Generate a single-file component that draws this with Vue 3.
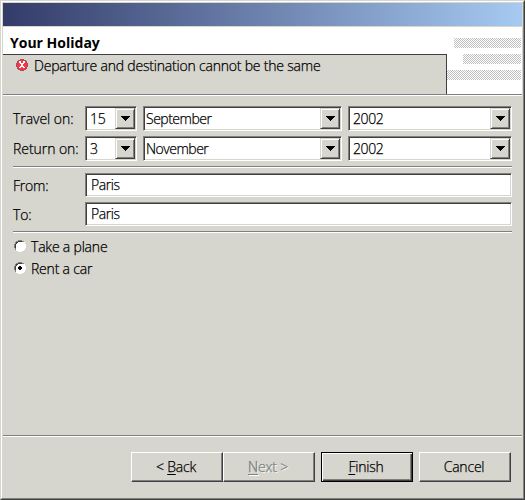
<script setup>
const dates = [
  { label: 'Travel on:', values: ['15', 'September', '2002'] },
  { label: 'Return on:', values: ['3', 'November', '2002'] }
]
const places = [
  { label: 'From:', value: 'Paris' },
  { label: 'To:', value: 'Paris' }
]
const transport = [
  { label: 'Take a plane', on: false },
  { label: 'Rent a car', on: true }
]
</script>

<template>
  <div class="window">
    <div class="frame">
      <div class="titlebar"></div>
      <header class="banner">
        <div class="left">
          <h1>Your Holiday</h1>
          <div class="message">
            <svg width="12" height="12" viewBox="0 0 12 12" shape-rendering="crispEdges">
              <path d="M4 0h4v1h2v1h1v2h1v4h-1v2h-1v1H8v1H4v-1H2v-1H1V8H0V4h1V2h1V1h2z" fill="#98505a" />
              <path d="M4 1h4v1h2v2h1v4h-1v2H8v1H4v-1H2V8H1V4h1V2h2z" fill="#fc3544" />
              <path d="M3 2h2v2h2V2h2v2H8v1H7v2h1v1h1v1H7V8H5v1H3V8h1V7h1V5H4V4H3z" fill="#fff" />
            </svg>
            <span>Departure and destination cannot be the same</span>
          </div>
        </div>
        <svg class="stripes" width="75" height="67" viewBox="0 0 75 67" shape-rendering="crispEdges">
          <defs>
            <pattern id="dither" width="2" height="2" patternUnits="userSpaceOnUse">
              <path d="M0 0h1v1H0zM1 1h1v1H1z" fill="#c0c0c0" />
            </pattern>
          </defs>
          <path d="M7 11h67v10H7zM16 27h58v10H16zM0 43h74v10H0z" fill="url(#dither)" />
        </svg>
      </header>
      <main>
        <div v-for="d in dates" :key="d.label" class="row date">
          <span class="label">{{ d.label }}</span>
          <div class="combos">
            <div v-for="(v, i) in d.values" :key="i" class="field combo">
              <span>{{ v }}</span>
              <i class="drop"><svg width="9" height="5" viewBox="0 0 9 5" shape-rendering="crispEdges"><path d="M0 0h9v1H8v1H7v1H6v1H5v1H4V4H3V3H2V2H1V1H0z" /></svg></i>
            </div>
          </div>
        </div>
        <div class="rule first"></div>
        <div v-for="p in places" :key="p.label" class="row place">
          <span class="label">{{ p.label }}</span>
          <div class="field">{{ p.value }}</div>
        </div>
        <div class="rule second"></div>
        <div v-for="t in transport" :key="t.label" class="option">
          <svg width="12" height="12" viewBox="0 0 12 12" shape-rendering="crispEdges">
            <path d="M4 1h4v1h2v2h1v4h-1v2H8v1H4v-1H2V8H1V4h1V2h2z" fill="#fff" />
            <path d="M4 0h4v1h2v1H8V1H4v1H2v2H1v4h1v2H1V8H0V4h1V2h1V1h2z" fill="#808080" />
            <path d="M4 1h4v1H4v1H3v1H2v4H1V4h1V2h2z" fill="#404040" />
            <path d="M10 2h1v2h1v4h-1v2h-1v1H8v1H4v-1H2v-1h2v1h4v-1h2V8h1V4h-1z" fill="#fff" />
            <path v-if="t.on" d="M5 4h2v1h1v2H7v1H5V7H4V5h1z" fill="#000" />
          </svg>
          <span>{{ t.label }}</span>
        </div>
      </main>
      <footer>
        <div class="button"><span>&lt; <u>B</u>ack</span></div>
        <div class="button disabled"><span><u>N</u>ext &gt;</span></div>
        <div class="button default"><span><u>F</u>inish</span></div>
        <div class="button cancel"><span>Cancel</span></div>
      </footer>
    </div>
  </div>
</template>

<style>
body { margin: 0; }
</style>

<style scoped>
* { box-sizing: border-box; }
.window {
  width: 525px; height: 500px; background: #d6d5ce; color: #000;
  font: 300 14px/17px "Open Sans", "Noto Sans", sans-serif; letter-spacing: -0.2px;
  -webkit-text-stroke: 0.25px currentColor;
  border: 1px solid; border-color: #d6d5ce #404040 #404040 #d6d5ce;
}
.frame {
  height: 498px; border: 1px solid; border-color: #fff #808080 #808080 #fff;
  padding: 1px 1px 0; display: flex; flex-direction: column; white-space: nowrap;
}
.titlebar { height: 23px; background: linear-gradient(90deg, #333b69, #a6caf0); margin-bottom: 1px; flex: none; }
.banner { height: 67px; flex: none; display: flex; background: #fff; }
.left { width: 444px; flex: none; display: flex; flex-direction: column; }
h1 {
  margin: 0; height: 27px; padding: 7px 0 0 7px; font-size: 14px; line-height: 17px;
  font-weight: 700; letter-spacing: 0; -webkit-text-stroke: 0;
}
.message {
  flex: 1; background: #d6d5ce; border: solid #404040; border-width: 1px 1px 0 0;
  display: flex; align-items: flex-start; padding: 2px 0 0 13px; gap: 6px;
}
.message svg { margin-top: 2px; }
.stripes { flex: none; }
main { flex: 1; border-top: 1px solid #808080; box-shadow: inset 0 1px #fff; padding: 11px 10px 0 10px; }
.row { display: grid; }
.date { grid-template-columns: 72px 427px; height: 25px; margin-bottom: 5px; }
.date .label { letter-spacing: -0.05px; }
.combos { display: grid; grid-template-columns: 52px 199px 164px; column-gap: 6px; }
.label { padding-top: 4px; }
.field {
  background: #fff; border: 1px solid; border-color: #808080 #fff #fff #808080;
  box-shadow: inset 1px 1px #404040, inset -1px -1px #d6d5ce;
}
.combo { display: flex; justify-content: space-between; padding: 1px; }
.combo span { padding: 2px 0 0 3px; }
.combo:nth-child(2) span { padding-left: 1px; letter-spacing: -0.5px; }
.combo:nth-child(3) span { letter-spacing: -0.4px; }
.drop {
  width: 20px; height: 21px; background: #d6d5ce; border: 1px solid; border-color: #d6d5ce #404040 #404040 #d6d5ce;
  box-shadow: inset 1px 1px #fff, inset -1px -1px #808080; display: flex; padding: 7px 0 0 5px;
}
.rule { height: 2px; background: #fff; border-top: 1px solid #808080; }
.first { margin-bottom: 5px; }
.place { grid-template-columns: 72px 427px; height: 24px; margin-bottom: 5px; }
.place .field { padding: 2px 0 0 5px; letter-spacing: -0.4px; }
.option { display: flex; gap: 5px; height: 22px; padding-left: 1px; }
.option svg { margin-top: 2px; }
.second { margin-bottom: 5px; }
footer {
  height: 63px; flex: none; display: flex; padding: 16px 0 0 128px;
  border-top: 1px solid #808080; box-shadow: inset 0 1px #fff;
}
.button {
  width: 92px; height: 30px; text-align: center; padding-top: 5px; border: 1px solid;
  border-color: #fff #404040 #404040 #fff; box-shadow: inset -1px -1px #808080;
}
.button span { padding-right: 2px; }
.disabled { color: #808080; text-shadow: 1px 1px #fff; }
.default { margin-left: 6px; border-color: #000; box-shadow: inset 1px 1px #fff, inset -1px -1px #404040, inset -2px -2px #808080; }
.cancel { margin-left: 6px; }
u { text-underline-offset: 2px; text-decoration-thickness: 1px; text-decoration-skip-ink: none; }
</style>
